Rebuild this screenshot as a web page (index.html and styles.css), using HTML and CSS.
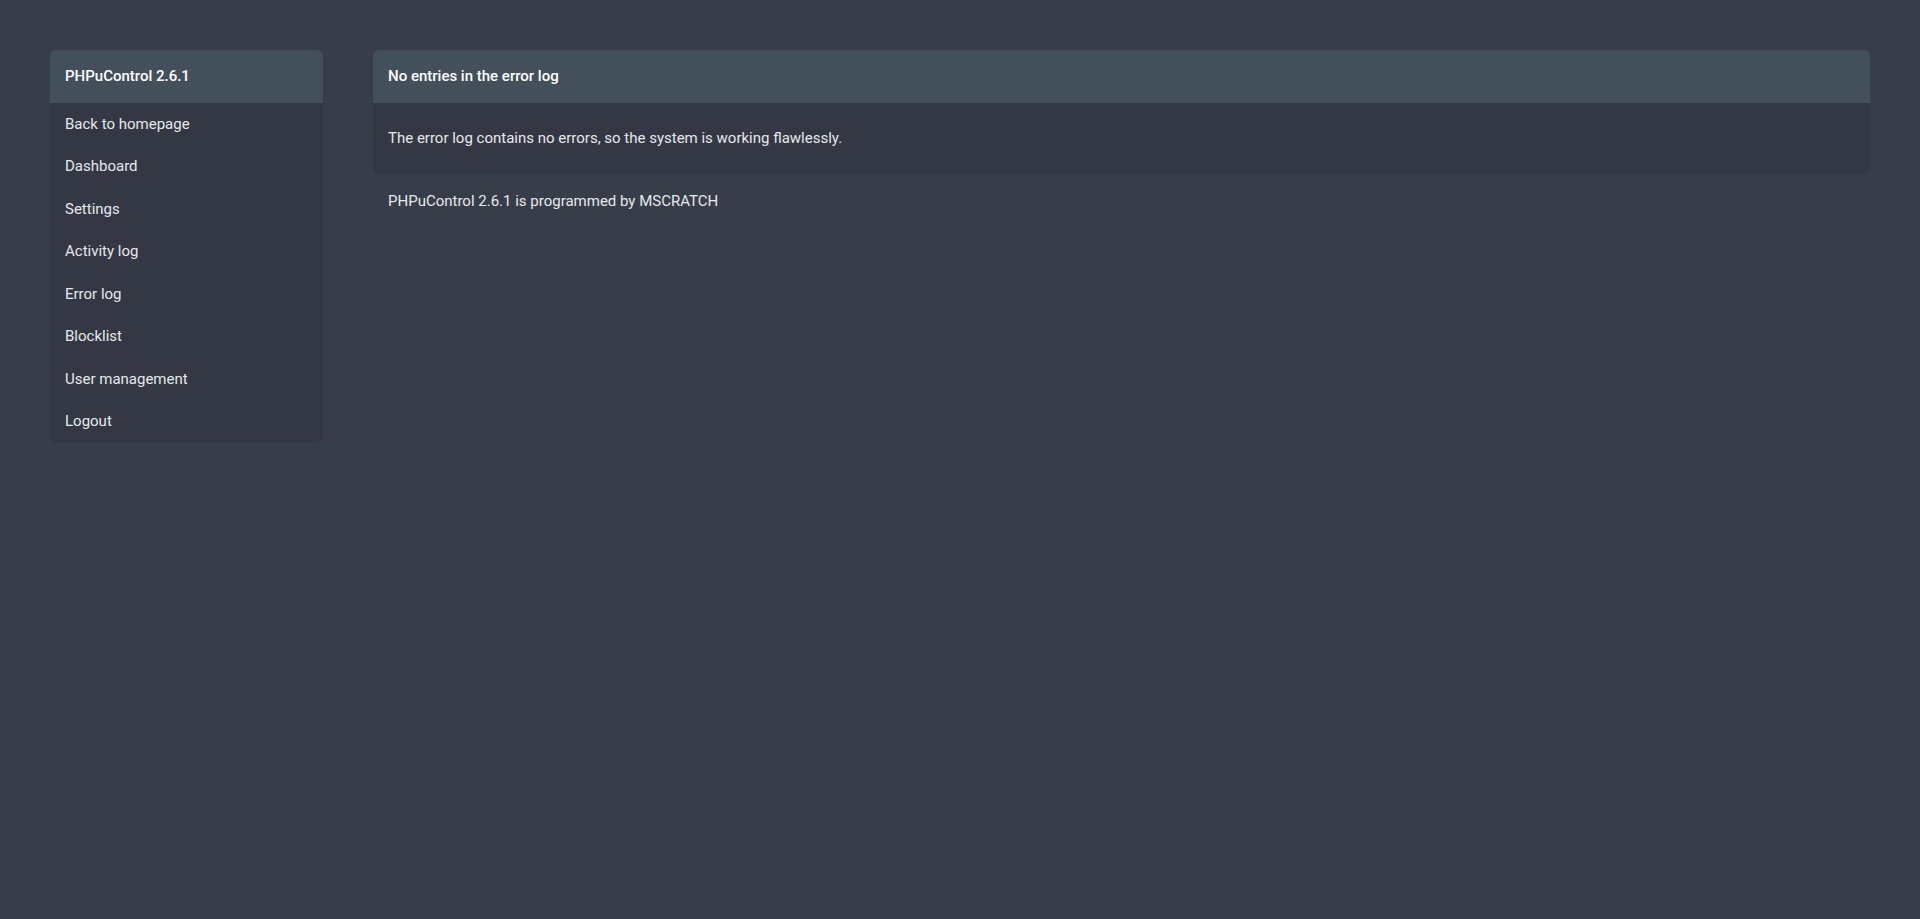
FILE: index.html
```html
<!DOCTYPE html>
<html lang="en">
<head>
<meta charset="utf-8">
<title>PHPuControl 2.6.1</title>
<link rel="stylesheet" href="styles.css">
</head>
<body>
<div class="layout">
  <aside class="sidebar">
    <div class="card-head">PHPuControl 2.6.1</div>
    <nav class="menu">
      <a class="menu-item" href="#">Back to homepage</a>
      <a class="menu-item" href="#">Dashboard</a>
      <a class="menu-item" href="#">Settings</a>
      <a class="menu-item" href="#">Activity log</a>
      <a class="menu-item" href="#">Error log</a>
      <a class="menu-item" href="#">Blocklist</a>
      <a class="menu-item" href="#">User management</a>
      <a class="menu-item" href="#">Logout</a>
    </nav>
  </aside>
  <main class="content">
    <section class="card">
      <div class="card-head">No entries in the error log</div>
      <div class="card-body">The error log contains no errors, so the system is working flawlessly.</div>
    </section>
    <footer class="footer">PHPuControl 2.6.1 is programmed by MSCRATCH</footer>
  </main>
</div>
</body>
</html>
```
FILE: styles.css
```css
html, body {
  margin: 0;
  padding: 0;
  height: 100%;
}
body {
  background: #383e49;
  font-family: Roboto, "Liberation Sans", sans-serif;
  font-size: 15px;
  line-height: 22.5px;
  color: #e6e8eb;
}
.layout {
  display: flex;
  align-items: flex-start;
  gap: 50px;
  padding: 50px;
}
.sidebar {
  flex: 0 0 15%;
  background: #333844;
  border-radius: 6px;
  overflow: hidden;
}
.card-head {
  background: #43505c;
  color: #ffffff;
  font-weight: 500;
  padding: 15px;
}
.menu {
  display: flex;
  flex-direction: column;
}
.menu-item {
  display: block;
  padding: 10px 15px;
  color: #e6e8eb;
  text-decoration: none;
}
.content {
  flex: 1;
  min-width: 0;
}
.card {
  background: #333844;
  border-radius: 6px;
  overflow: hidden;
}
.card-body {
  padding: 24.5px 15px;
}
.footer {
  padding: 15.5px 15px;
}
```
